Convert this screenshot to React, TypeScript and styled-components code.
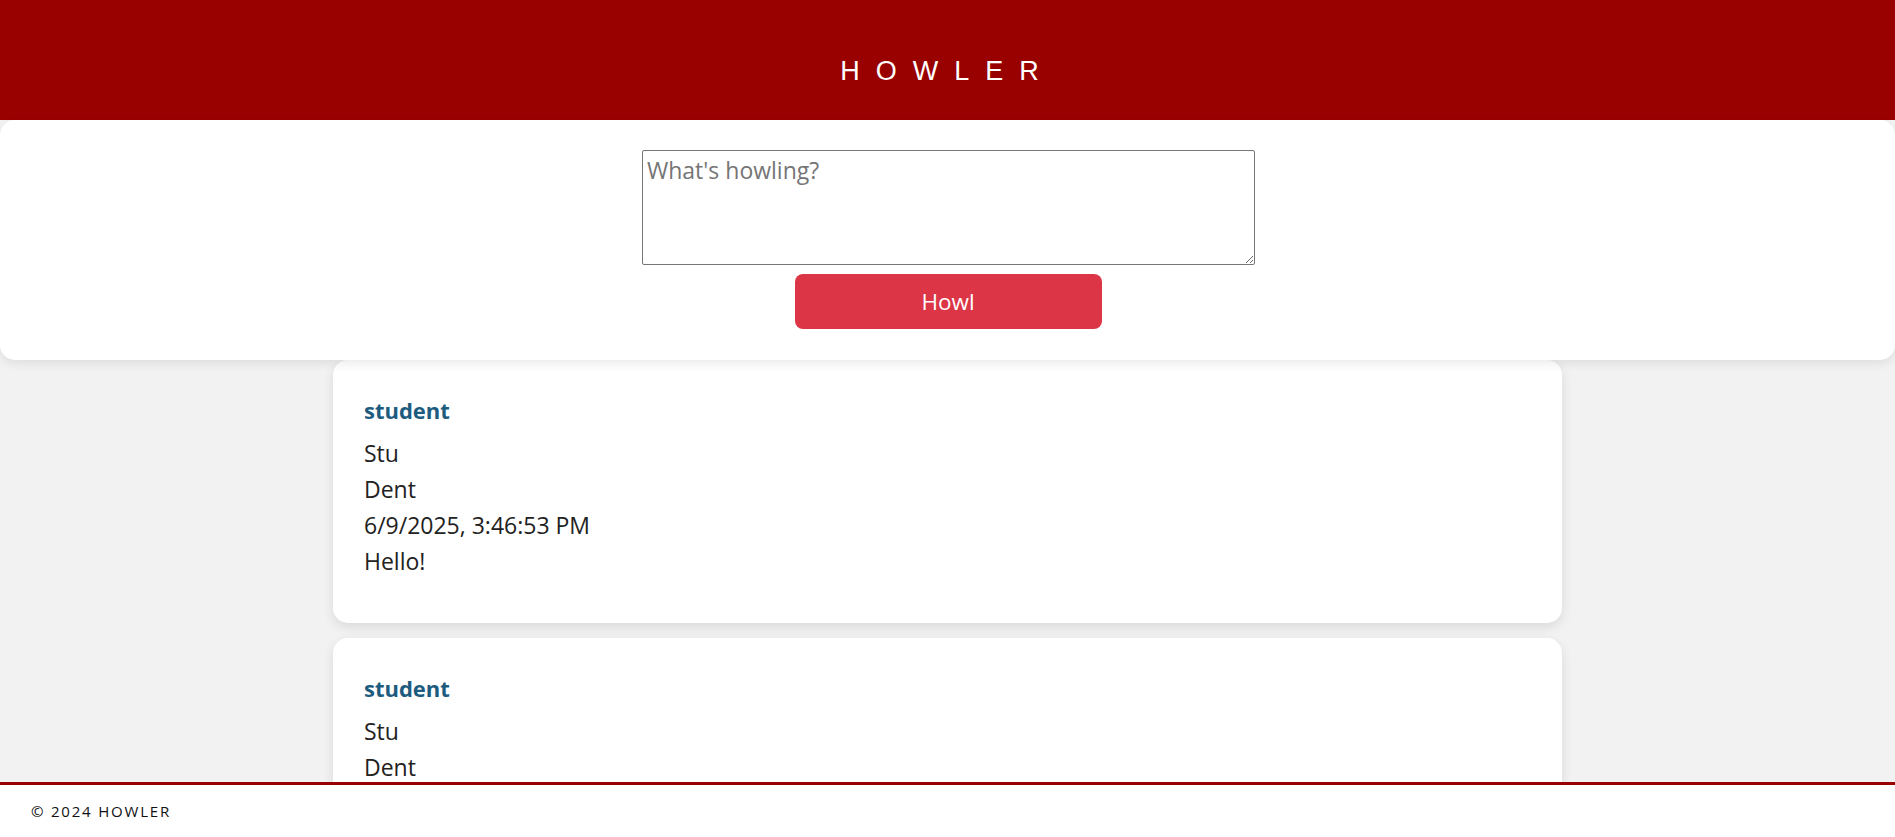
import React, { useState } from "react";
import styled, { createGlobalStyle } from "styled-components";

const GlobalStyle = createGlobalStyle`
    body {
        margin: 0;
        background-color: #f2f2f2;
        font-family: "Open Sans", "Noto Sans", sans-serif;
        color: #222;
    }
`

export const Header = styled.header`
    height: 120px;
    box-sizing: border-box;
    padding-top: 22px;
    background-color: #990000;
    display: flex;
    justify-content: center;
    align-items: center;
`

export const Title = styled.h1`
    margin: 0;
    color: white;
    font-family: "Liberation Sans", Arial, sans-serif;
    font-weight: normal;
    font-size: 27px;
    letter-spacing: 16px;
`

export const Composer = styled.form`
    background-color: white;
    border-radius: 15px;
    box-shadow: 0 4px 10px rgba(0, 0, 0, 0.08);
    padding: 30px 0 31px;
    display: flex;
    flex-direction: column;
    align-items: center;
    gap: 9px;
    position: relative;
    z-index: 1;
`

export const TextArea = styled.textarea`
    width: 613px;
    height: 115px;
    margin-left: 2px;
    box-sizing: border-box;
    border: 1px solid #767676;
    border-radius: 2px;
    padding: 3px 4px;
    font-family: "Open Sans", "Noto Sans", sans-serif;
    font-size: 23px;
    color: #222;

    &::placeholder {
        color: #757575;
    }
`

export const Button = styled.button`
    width: 307px;
    height: 55px;
    margin-left: 1px;
    border: none;
    border-radius: 8px;
    background-color: #dc3545;
    color: white;
    font-family: "Open Sans", "Noto Sans", sans-serif;
    font-size: 22.5px;
    cursor: pointer;
`

export const Feed = styled.main`
    display: flex;
    flex-direction: column;
    align-items: center;
    gap: 15px;
    padding-bottom: 80px;
`

export const Card = styled.article`
    width: 1229px;
    box-sizing: border-box;
    background-color: white;
    border-radius: 15px;
    box-shadow: 0 4px 12px rgba(0, 0, 0, 0.1);
    padding: 32px 31px 44px;
`

export const Author = styled.h3`
    margin: 0 0 7px;
    font-size: 22px;
    font-weight: bold;
    line-height: 36px;
    color: #1d5c7e;
`

export const Line = styled.p`
    margin: 0;
    font-size: 23px;
    line-height: 36px;
`

export const Footer = styled.footer`
    position: fixed;
    left: 0;
    right: 0;
    bottom: 0;
    height: 55px;
    box-sizing: border-box;
    border-top: 3px solid #990000;
    background-color: white;
    display: flex;
    align-items: center;
    padding-left: 31px;
    font-size: 15px;
    letter-spacing: 1.8px;
    color: #111;
    z-index: 10;
`

type Howl = {
    user: string;
    first: string;
    last: string;
    date: string;
    text: string;
}

const howls: Howl[] = [
    { user: "student", first: "Stu", last: "Dent", date: "6/9/2025, 3:46:53 PM", text: "Hello!" },
    { user: "student", first: "Stu", last: "Dent", date: "6/9/2025, 3:41:12 PM", text: "Howl!" },
]

const App: React.FC = () => {
    const [texto, setTexto] = useState("");

    return (
        <>
            <GlobalStyle />
            <Header>
                <Title>HOWLER</Title>
            </Header>
            <Composer onSubmit={(e) => e.preventDefault()}>
                <TextArea
                    placeholder="What's howling?"
                    value={texto}
                    onChange={(e) => setTexto(e.target.value)}
                />
                <Button type="submit">Howl</Button>
            </Composer>
            <Feed>
                {howls.map((h, i) => (
                    <Card key={i}>
                        <Author>{h.user}</Author>
                        <Line>{h.first}</Line>
                        <Line>{h.last}</Line>
                        <Line>{h.date}</Line>
                        <Line>{h.text}</Line>
                    </Card>
                ))}
            </Feed>
            <Footer>© 2024 HOWLER</Footer>
        </>
    )
}

export default App;
